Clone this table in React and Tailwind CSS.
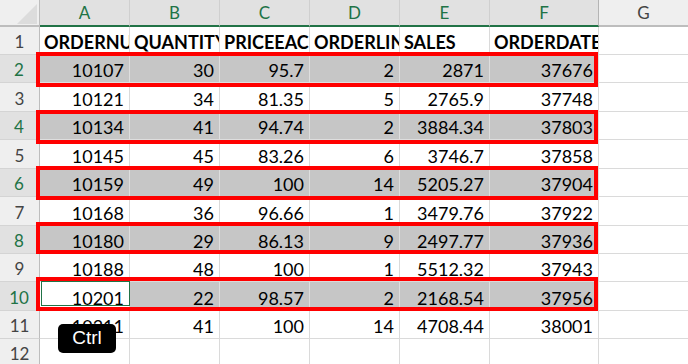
import React from "react";

const COLS = [
  { k: "A", w: "w-[90px]" },
  { k: "B", w: "w-[90px]" },
  { k: "C", w: "w-[90px]" },
  { k: "D", w: "w-[90px]" },
  { k: "E", w: "w-[90px]" },
  { k: "F", w: "w-[109px]" },
  { k: "G", w: "w-[90px]" },
];

const ROWS = [
  { n: 1, h: "h-[28px]", head: true, v: ["ORDERNUMBER", "QUANTITYORDERED", "PRICEEACH", "ORDERLINENUMBER", "SALES", "ORDERDATE"] },
  { n: 2, h: "h-[28px]", sel: true, v: ["10107", "30", "95.7", "2", "2871", "37676"] },
  { n: 3, h: "h-[29px]", v: ["10121", "34", "81.35", "5", "2765.9", "37748"] },
  { n: 4, h: "h-[28px]", sel: true, v: ["10134", "41", "94.74", "2", "3884.34", "37803"] },
  { n: 5, h: "h-[29px]", v: ["10145", "45", "83.26", "6", "3746.7", "37858"] },
  { n: 6, h: "h-[28px]", sel: true, v: ["10159", "49", "100", "14", "5205.27", "37904"] },
  { n: 7, h: "h-[29px]", v: ["10168", "36", "96.66", "1", "3479.76", "37922"] },
  { n: 8, h: "h-[28px]", sel: true, v: ["10180", "29", "86.13", "9", "2497.77", "37936"] },
  { n: 9, h: "h-[28px]", v: ["10188", "48", "100", "1", "5512.32", "37943"] },
  { n: 10, h: "h-[29px]", sel: true, active: true, v: ["10201", "22", "98.57", "2", "2168.54", "37956"] },
  { n: 11, h: "h-[28px]", v: ["10211", "41", "100", "14", "4708.44", "38001"] },
  { n: 12, h: "h-[28px]", v: [] },
];

const BOXES = [
  "top-[52px] h-[35px]",
  "top-[110px] h-[34px]",
  "top-[166px] h-[34px]",
  "top-[222px] h-[32px]",
  "top-[277px] h-[34px]",
];

export default function App() {
  return (
    <div
      className="relative w-[688px] h-[364px] overflow-hidden bg-white text-black"
      style={{ fontFamily: "Lato, 'Open Sans', sans-serif" }}
    >
      {/* Column headers */}
      <div className="flex h-[27px]">
        <div className="relative w-[40px] shrink-0 bg-[#efefef] border-r border-b-2 border-[#bdbdbd]">
          <svg className="absolute left-0 top-0" width="39" height="25" viewBox="0 0 39 25">
            <polygon points="17,24 37,24 37,4" fill="#dcdcdc" />
          </svg>
        </div>
        {COLS.map((c, i) => {
          const sel = i < 6;
          return (
            <div
              key={c.k}
              className={
                "shrink-0 flex items-center justify-center text-[17px] border-r border-b-2 " +
                c.w +
                (sel
                  ? " bg-[#e1e1e1] text-[#217346] border-b-[#217346] " + (i === 5 ? "border-r-[#b4b4b4]" : "border-r-[#cfcfcf]")
                  : " bg-[#efefef] text-[#444444] border-b-[#bdbdbd] border-r-[#cfcfcf]")
              }
            >
              {c.k}
            </div>
          );
        })}
      </div>

      {/* Rows */}
      {ROWS.map((r) => (
        <div key={r.n} className={"flex " + r.h}>
          <div
            className={
              "w-[40px] shrink-0 flex items-end justify-center pb-[3px] text-[17px] leading-[18px] border-b border-b-[#d4d4d4] " +
              (r.sel
                ? "bg-[#e1e1e1] text-[#217346] border-r-2 border-r-[#217346]"
                : "bg-[#efefef] text-[#444444] border-r border-r-[#bdbdbd]")
            }
          >
            {r.n}
          </div>
          {COLS.map((c, i) => {
            const val = r.v[i] || "";
            const shaded = r.sel && i < 6 && !(r.active && i === 0);
            return (
              <div
                key={c.k}
                className={
                  "shrink-0 overflow-hidden whitespace-nowrap flex items-end pb-[3px] text-[18px] leading-[18px] border-r border-b " +
                  c.w +
                  (shaded ? " bg-[#c6c6c6] border-[#dedede]" : " bg-white border-[#dadada]") +
                  (r.head ? " font-bold pl-[4px] justify-start" : " justify-end pr-[5px]")
                }
              >
                {val}
              </div>
            );
          })}
        </div>
      ))}

      {/* Active cell outline */}
      <div className="absolute left-[41px] top-[281px] w-[89px] h-[25px] border border-[#217346]" />

      {/* Red annotation boxes */}
      {BOXES.map((b, i) => (
        <div key={i} className={"absolute left-[36px] w-[562px] border-4 border-[#ff0000] " + b} />
      ))}

      {/* Ctrl key badge */}
      <div
        className="absolute left-[58px] top-[324px] w-[58px] h-[29px] rounded-[5px] bg-black text-white flex items-center justify-center text-[19px]"
        style={{ fontFamily: "'Liberation Sans', sans-serif" }}
      >
        Ctrl
      </div>
    </div>
  );
}
